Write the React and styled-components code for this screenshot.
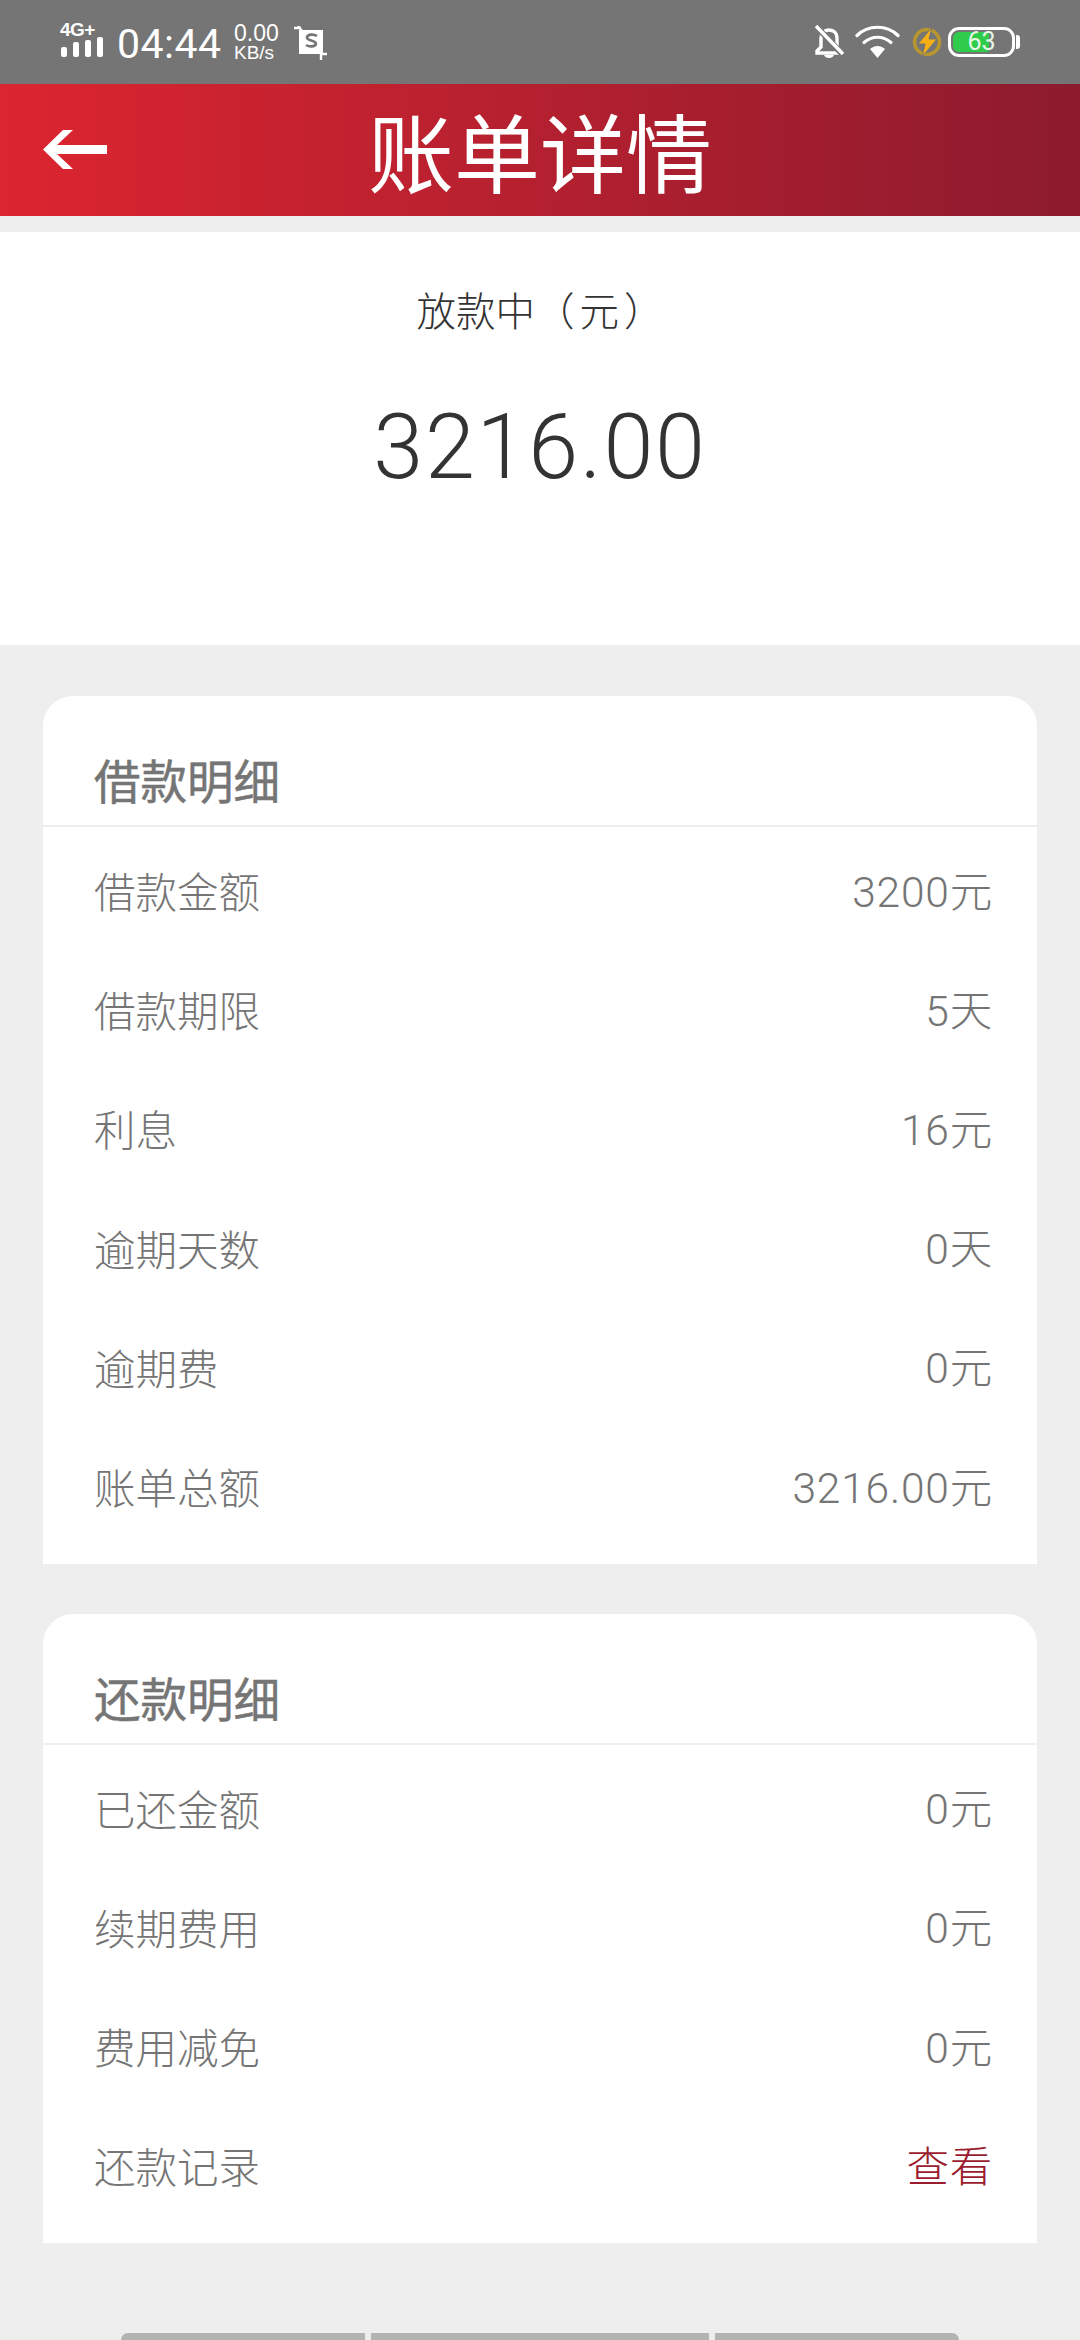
import React from "react";
import styled, { createGlobalStyle } from "styled-components";

const Global = createGlobalStyle`
  html, body { margin: 0; padding: 0; background: #eeeeee; }
  body { font-family: "Noto Sans", "Noto Sans CJK SC", sans-serif; }
  * { box-sizing: border-box; }
`;
const Page = styled.div`
  width: 1080px; height: 2340px; background: #eeeeee; overflow: hidden;
  display: flex; flex-direction: column; position: relative;
`;
const StatusBar = styled.div`
  height: 84px; flex: none; background: #757575; display: flex; align-items: flex-start; justify-content: space-between;
  color: #fff; padding: 0 60px;
`;
const StatusLeft = styled.div`display: flex; align-items: flex-start; padding-top: 22px;`;
const StatusRight = styled.div`display: flex; align-items: flex-start; padding-top: 25px;`;
const Clock = styled.div`
  font: 400 41px/44px Roboto, sans-serif; margin: 0 0 0 13px; letter-spacing: .5px; width: 117px;
`;
const Speed = styled.div`
  font-family: "Liberation Sans", sans-serif; width: 60px;
  & > b { display: block; font-weight: 400; font-size: 23px; line-height: 22px; }
  & > i { display: block; font-style: normal; font-size: 19px; line-height: 18px; }
`;
const Signal = styled.svg`width: 44px; height: 36px; display: block;`;
const SignalWrap = styled.div`position: relative; width: 44px; height: 36px;`;
const SignalLabel = styled.span`
  position: absolute; left: 0; top: 0; font: 700 19px/16px "Liberation Sans", sans-serif; letter-spacing: -.5px; white-space: nowrap;
`;
const Header = styled.header`
  height: 132px; flex: none; background: linear-gradient(90deg, #dc2530 0%, #8c1b2e 100%);
  display: flex; align-items: center; justify-content: center; position: relative; color: #fff;
`;
const Back = styled.svg`position: absolute; left: 43px; top: 46px; width: 64px; height: 39px;`;
const Title = styled.h1`
  margin: 0; font: 400 86px/1 "Noto Sans CJK SC", sans-serif;
`;
const Summary = styled.section`
  margin-top: 16px; height: 413px; flex: none; background: #fff; display: flex; flex-direction: column; align-items: center;
`;
const SummaryLabel = styled.div`
  margin-top: 52px; font: 300 39.5px/50px "Noto Sans CJK SC", sans-serif; color: #333;
`;
const Unit = styled.span`margin: 0 5px;`;
const Amount = styled.div`
  margin-top: 59px; font: 300 90px/110px Roboto, sans-serif; letter-spacing: 1.8px; color: #333;
`;
const Card = styled.section`
  margin: ${p => p.$top}px 43px 0; background: #fff; border-radius: 30px 30px 0 0; flex: none;
`;
const CardTitle = styled.h2`
  margin: 0; height: 131px; padding: 53px 0 0 51px; border-bottom: 2px solid #eeeeee;
  font: 400 46.5px/60px "Noto Sans CJK SC", sans-serif; color: #757575; -webkit-text-stroke: .5px #757575;
`;
const Rows = styled.div`padding: 5px 0 16.5px;`;
const Row = styled.div`
  height: 119.2px; display: flex; align-items: center; justify-content: space-between; padding: 0 44px 0 51px;
`;
const Label = styled.span`
  font: 300 41.5px/50px "Noto Sans CJK SC", sans-serif; color: #757575; margin-bottom: 3px;
`;
const Value = styled.span`
  font: 300 42.5px/50px Roboto, "Noto Sans CJK SC", sans-serif; letter-spacing: .8px;
  margin-top: 2px; color: ${p => p.$link ? "#9b1c2e" : "#757575"};
`;
const NavHint = styled.div`
  position: absolute; left: 121px; top: 2333px; display: flex; gap: 6px;
`;
const NavSeg = styled.div`
  height: 7px; width: ${p => p.$w}px; background: #b3b3b3; border-radius: ${p => p.$r};
`;
const BatteryBox = styled.div`
  position: relative; margin-left: 6px; width: 67px; height: 30px; border: 3px solid #fff; border-radius: 11px; margin-top: 2px;
  padding: 2px;
`;
const BatteryFill = styled.div`height: 100%; width: 64%; background: #2ecc4a; border-radius: 6px 2px 2px 6px;`;
const BatteryText = styled.span`
  position: absolute; inset: -2px 0 0 0; text-align: center; font: 400 25px/28px Roboto, sans-serif; color: #e6f5e6;
`;
const BatteryCap = styled.div`width: 4px; height: 14px; background: #fff; border-radius: 0 3px 3px 0; margin: 10px 0 0 1px;`;

const Icon = styled.svg`display: block; margin: ${p => p.$m || 0};`;

const Bell = () => (
  <Icon width="32" height="34" viewBox="0 0 32 34">
    <path d="M16 5c-5 0-8 3-8 8v9l-4 4v2h24v-2l-4-4v-9c0-5-3-8-8-8z" fill="none" stroke="#fff" strokeWidth="3.4"/>
    <path d="M11 30c1 4 9 4 10 0z" fill="#fff"/>
    <path d="M2 0l28 30" stroke="#757575" strokeWidth="6"/>
    <path d="M3 1l27 28" stroke="#fff" strokeWidth="3.4"/>
  </Icon>
);
const Wifi = () => (
  <Icon width="45" height="34" viewBox="0 0 45 34" $m="0 0 0 10px">
    <g fill="none" stroke="#fff" strokeLinecap="round">
      <path d="M2 10.5C13 -.5 32 -.5 43 10.5" strokeWidth="3.2"/>
      <path d="M9 17.5c8-7 19-7 27 0" strokeWidth="3.2"/>
    </g>
    <path d="M15 24c5-4 10-4 15 0l-7.5 9z" fill="#fff"/>
  </Icon>
);
const Charge = () => (
  <Icon width="30" height="32" viewBox="0 0 30 32" $m="1px 0 0 12px">
    <circle cx="15" cy="16" r="12.5" fill="none" stroke="#b8962e" strokeWidth="3.5"/>
    <path d="M20 1L6 18h7l-3 13 15-18h-8z" fill="#f5ae14" stroke="#757575" strokeWidth="1"/>
  </Icon>
);
const Screenshot = () => (
  <Icon width="34" height="34" viewBox="0 0 34 34" $m="4px 0 0">
    <path d="M0 2h7M4 0l4 5" stroke="#fff" strokeWidth="2.4"/>
    <rect x="5" y="4" width="24" height="24" fill="#fff"/>
    <path d="M27 27v7M26 28h7" stroke="#fff" strokeWidth="2.4"/>
    <path d="M23 10c-3-2-9-2-10 1-1 4 9 3 9 7-1 3-7 3-10 1" fill="none" stroke="#757575" strokeWidth="2.6"/>
  </Icon>
);

const loan = [["借款金额","3200元"],["借款期限","5天"],["利息","16元"],["逾期天数","0天"],["逾期费","0元"],["账单总额","3216.00元"]];
const repay = [["已还金额","0元"],["续期费用","0元"],["费用减免","0元"],["还款记录","查看",true]];

const List = ({ items }) => (
  <Rows>
    {items.map(([l, v, link]) => (
      <Row key={l}><Label>{l}</Label><Value $link={link}>{v}</Value></Row>
    ))}
  </Rows>
);

export default function App() {
  return (
    <Page>
      <Global />
      <StatusBar>
        <StatusLeft>
          <SignalWrap>
            <SignalLabel>4G+</SignalLabel>
            <Signal viewBox="0 0 44 36">
              <rect x="1" y="25" width="6" height="10" rx="2" fill="#fff"/>
              <rect x="13" y="20" width="6" height="15" rx="2" fill="#fff"/>
              <rect x="25" y="18" width="6" height="17" rx="2" fill="#fff"/>
              <rect x="37" y="15" width="6" height="20" rx="2" fill="#fff"/>
            </Signal>
          </SignalWrap>
          <Clock>04:44</Clock>
          <Speed><b>0.00</b><i>KB/s</i></Speed>
          <Screenshot />
        </StatusLeft>
        <StatusRight>
          <Bell />
          <Wifi />
          <Charge />
          <BatteryBox>
            <BatteryFill />
            <BatteryText>63</BatteryText>
          </BatteryBox>
          <BatteryCap />
        </StatusRight>
      </StatusBar>
      <Header>
        <Back viewBox="0 0 64 39">
          <path d="M0 19.5L20 0h10L14 15h50v9H14l16 15H20z" fill="#fff"/>
        </Back>
        <Title>账单详情</Title>
      </Header>
      <Summary>
        <SummaryLabel>放款中（<Unit>元</Unit>）</SummaryLabel>
        <Amount>3216.00</Amount>
      </Summary>
      <Card $top={51}>
        <CardTitle>借款明细</CardTitle>
        <List items={loan} />
      </Card>
      <Card $top={50}>
        <CardTitle>还款明细</CardTitle>
        <List items={repay} />
      </Card>
      <NavHint>
        <NavSeg $w={244} $r="8px 0 0 0" />
        <NavSeg $w={338} $r="0" />
        <NavSeg $w={244} $r="0 8px 0 0" />
      </NavHint>
    </Page>
  );
}
